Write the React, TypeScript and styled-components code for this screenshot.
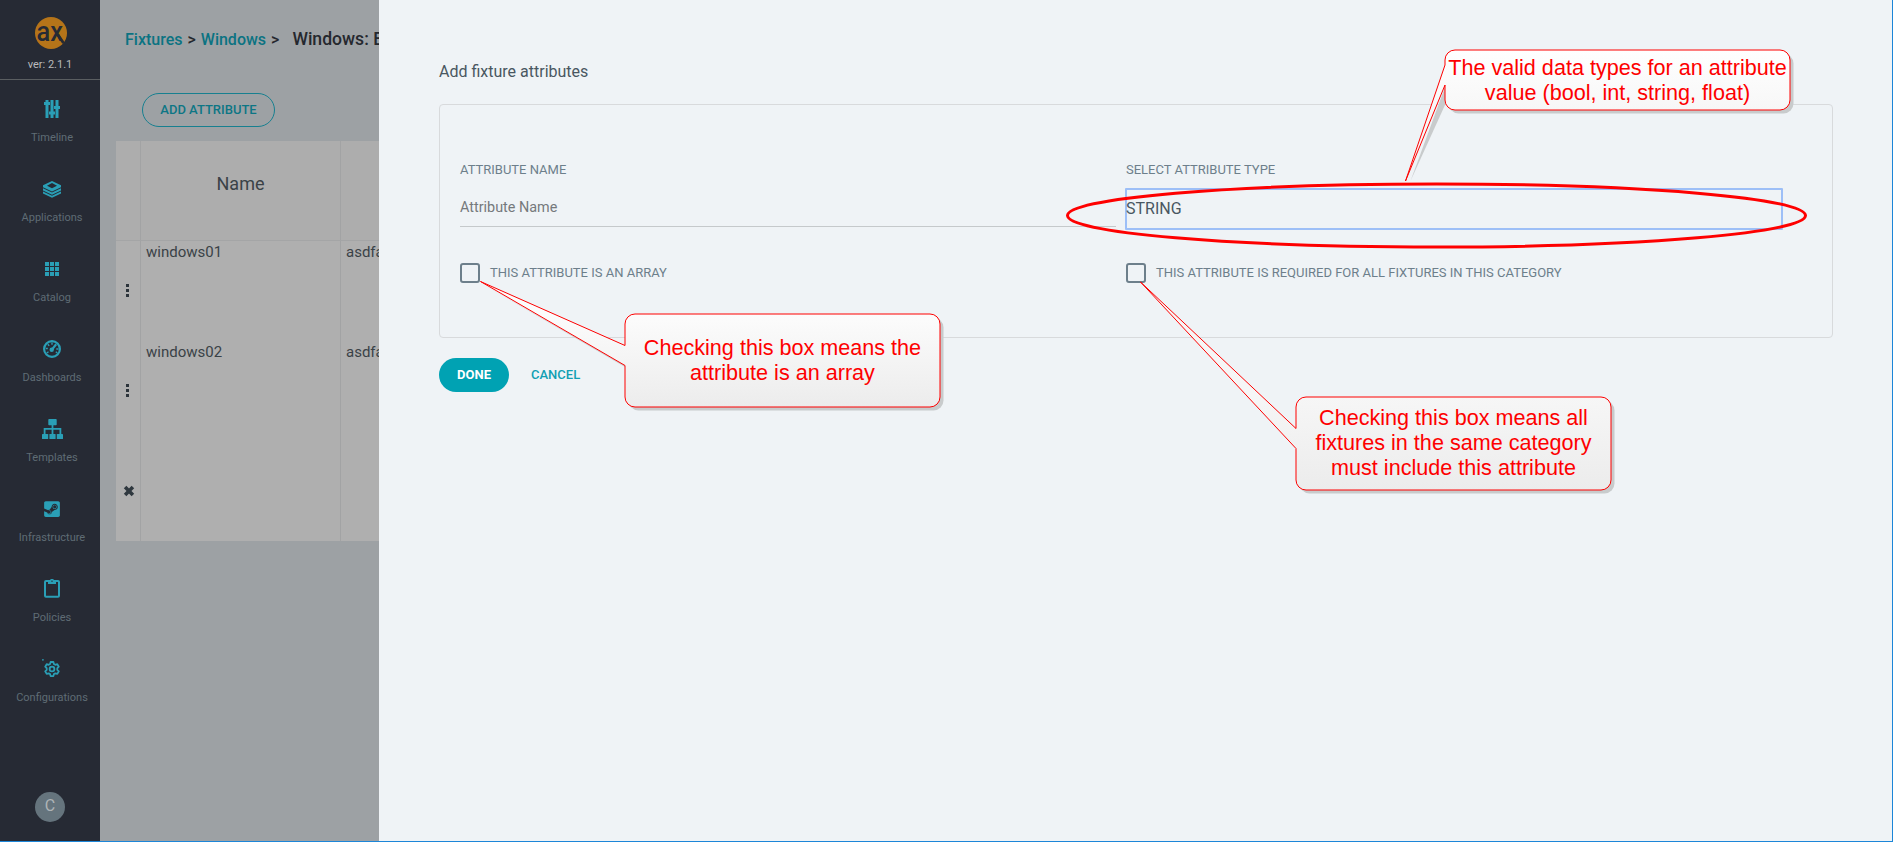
import React from "react";
import styled, { createGlobalStyle } from "styled-components";
import { FaSteamSquare } from "react-icons/fa";

const GlobalStyle = createGlobalStyle`
  *, *::before, *::after { box-sizing: border-box; }
  body {
    margin: 0;
    overflow: hidden;
    background: #eff3f6;
    font-family: Roboto, "Liberation Sans", sans-serif;
  }
  button { font-family: inherit; cursor: pointer; }
`;

const Shell = styled.div`
  position: relative;
  display: grid;
  grid-template-columns: 100px 279px 1fr;
  height: 842px;
  width: 1893px;
  border-bottom: 1px solid #1c86d8;
  overflow: hidden;
`;

/* ---------- side navigation ---------- */

const Sidebar = styled.nav`
  display: flex;
  flex-direction: column;
  background: #262a34;
`;

const Brand = styled.div`
  display: flex;
  flex-direction: column;
  align-items: center;
  height: 80px;
  padding-top: 17px;
  border-bottom: 1px solid #5a5e61;
`;

const Version = styled.span`
  margin-top: 8px;
  font-size: 11px;
  line-height: 14px;
  color: #b9babc;
`;

const NavList = styled.div`
  display: flex;
  flex-direction: column;
  padding: 15px 0 0 4px;
`;

const NavItem = styled.a`
  display: flex;
  flex-direction: column;
  align-items: center;
  height: 80px;
  color: #2a9fb6;
`;

const NavIcon = styled.span`
  display: flex;
  align-items: center;
  justify-content: center;
  height: 28px;
  width: 28px;
`;

const NavLabel = styled.span`
  margin-top: 8px;
  font-size: 11px;
  line-height: 14px;
  color: #5f6c74;
`;

const Avatar = styled.div`
  width: 30px;
  height: 30px;
  margin: auto auto 19px;
  border-radius: 50%;
  background: #65747d;
  color: #aeb3b6;
  font-size: 16px;
  line-height: 27px;
  text-align: center;
`;

/* ---------- dimmed page ---------- */

const Page = styled.main`
  display: flex;
  flex-direction: column;
  overflow: hidden;
  background: #9da1a4;
`;

const Breadcrumbs = styled.div`
  display: flex;
  align-items: baseline;
  gap: 5px;
  height: 93px;
  padding: 28px 0 0 25px;
  font-size: 16px;
  font-weight: 500;
  line-height: 22px;
  white-space: nowrap;
  color: #25282e;
`;

const Crumb = styled.a`
  color: #0b7382;
`;

const PageName = styled.span`
  margin-left: 8px;
  font-size: 17.6px;
`;

const OutlineButton = styled.button`
  align-self: flex-start;
  width: 133px;
  height: 34px;
  margin: 0 0 14px 42px;
  padding: 0 0 1px;
  border: 1px solid #178090;
  border-radius: 17px;
  background: none;
  color: #0d7685;
  font-size: 13px;
  font-weight: 500;
`;

const Table = styled.div`
  display: grid;
  grid-template-columns: 25px 200px 200px;
  grid-template-rows: 100px 100px 100px 100px;
  width: 425px;
  margin-left: 16px;
  background: #afafaf;
`;

const HeadCell = styled.div`
  display: flex;
  justify-content: center;
  padding-top: 32px;
  border-right: 1px solid #a2a3a4;
  border-bottom: 1px solid #a4a5a6;
  background: #adadad;
  color: #3a4247;
  font-size: 18px;
  line-height: 22px;
`;

const Cell = styled.div`
  padding-left: 5px;
  border-right: 1px solid #a2a3a4;
  color: #3a4247;
  font-size: 15px;
  line-height: 22px;
`;

const ActionCell = styled.div`
  display: flex;
  justify-content: center;
  align-items: center;
  border-right: 1px solid #a2a3a4;
`;

const Kebab = styled.span`
  display: flex;
  flex-direction: column;
  gap: 2px;
  margin: 0 1px 2px 0;
  i {
    width: 3px;
    height: 3px;
    background: #2c343b;
  }
`;

/* ---------- sliding panel ---------- */

const Panel = styled.section`
  display: flex;
  flex-direction: column;
  padding: 60px 59px 0 60px;
  border-right: 1px solid #1c86d8;
  background: #eff3f6;
`;

const PanelTitle = styled.h1`
  margin: 0 0 21px;
  font-size: 16px;
  font-weight: 400;
  line-height: 23px;
  color: #495761;
`;

const Card = styled.div`
  display: grid;
  grid-template-columns: 656px 658px;
  column-gap: 9px;
  align-content: start;
  height: 234px;
  padding: 57px 20px 0;
  border: 1px solid #d8dadc;
  border-radius: 4px;
`;

const Field = styled.div`
  display: flex;
  flex-direction: column;
`;

const Label = styled.label<{ $indent?: number }>`
  padding-left: ${(p) => p.$indent ?? 0}px;
  font-size: 13px;
  line-height: 16px;
  color: #6d7f8b;
`;

const TextInput = styled.div`
  height: 39px;
  margin: 10px 0 3px;
  border-bottom: 1px solid #c5c9cb;
  font-size: 14.4px;
  line-height: 39px;
  color: #75797c;
`;

const SelectBox = styled.div`
  height: 42px;
  margin-top: 10px;
  border: 2px solid #9dbff7;
  border-radius: 1px;
  font-size: 16px;
  line-height: 37px;
  text-indent: -1px;
  color: #495761;
`;

const CheckRow = styled.div<{ $indent?: number }>`
  display: flex;
  align-items: center;
  gap: 10px;
  height: 20px;
  margin: 33px 0 0 ${(p) => p.$indent ?? 0}px;
`;

const CheckBox = styled.span`
  width: 20px;
  height: 20px;
  border: 2px solid #6d7f8b;
  border-radius: 3px;
`;

const Actions = styled.div`
  display: flex;
  align-items: center;
  gap: 22px;
  margin-top: 20px;
`;

const PrimaryButton = styled.button`
  width: 70px;
  height: 34px;
  padding: 0 0 1px;
  border: 0;
  border-radius: 17px;
  background: #00a2b3;
  color: #fff;
  font-size: 13px;
  font-weight: 700;
`;

const LinkButton = styled.button`
  padding: 0 0 1px;
  border: 0;
  background: none;
  color: #119fb3;
  font-size: 13px;
  font-weight: 500;
`;

/* ---------- annotations ---------- */

const Annotations = styled.svg`
  position: absolute;
  inset: 0;
  pointer-events: none;
`;

const CalloutText = styled.div<{ $x: number; $y: number; $w: number; $h: number }>`
  position: absolute;
  left: ${(p) => p.$x}px;
  top: ${(p) => p.$y}px;
  width: ${(p) => p.$w}px;
  height: ${(p) => p.$h}px;
  display: flex;
  flex-direction: column;
  align-items: center;
  justify-content: center;
  font-family: "Liberation Sans", Arial, sans-serif;
  font-size: 21.6px;
  line-height: 25px;
  white-space: nowrap;
  color: #fe0000;
`;

interface CalloutSpec {
  id: string;
  x: number;
  y: number;
  w: number;
  h: number;
  tip: [number, number];
  base: [number, number];
  lift: number;
  shadow: string;
  from: string;
  to: string;
  lines: string[];
}

const callouts: CalloutSpec[] = [
  {
    id: "types", x: 1445, y: 50, w: 345, h: 60, tip: [1405.5, 181], base: [65, 85], lift: 0,
    shadow: "M1410.5 181L1445 87V105z", from: "#ffffff", to: "#f7f7f7",
    lines: ["The valid data types for an attribute", "value (bool, int, string, float)"],
  },
  {
    id: "array", x: 625, y: 314, w: 315, h: 93, tip: [480.5, 281.5], base: [345.5, 365.5], lift: 1,
    shadow: "M482 283.5L625 365.5V367z", from: "#fcfcfc", to: "#ececec",
    lines: ["Checking this box means the", "attribute is an array"],
  },
  {
    id: "required", x: 1296, y: 397, w: 315, h: 93, tip: [1140.5, 282], base: [428.5, 448.5], lift: 1,
    shadow: "", from: "#f6f6f6", to: "#ececec",
    lines: ["Checking this box means all", "fixtures in the same category", "must include this attribute"],
  },
];

function bubblePath({ x, y, w, h, tip, base }: CalloutSpec) {
  const r = 10;
  return `M${x + r} ${y}H${x + w - r}a${r} ${r} 0 0 1 ${r} ${r}V${y + h - r}a${r} ${r} 0 0 1 ${-r} ${r}H${x + r}a${r} ${r} 0 0 1 ${-r} ${-r}V${base[1]}L${tip[0]} ${tip[1]}L${x} ${base[0]}V${y + r}a${r} ${r} 0 0 1 ${r} ${-r}z`;
}

/* ---------- icons ---------- */

const Logo = () => (
  <svg width="33" height="33" viewBox="0 0 33 33">
    <circle cx="17" cy="16" r="16" fill="#b57419" />
    <text x="2.5" y="23.500" fontFamily="Roboto" fontWeight="500" fontSize="27" fill="#262a34" textLength="26.500" lengthAdjust="spacingAndGlyphs">ax</text>
    <path d="M24 18l5.500 8" stroke="#262a34" strokeWidth="2.800" />
  </svg>
);

const TimelineIcon = () => (
  <svg width="16" height="18" viewBox="0 0 16 18" fill="currentColor">
    <path d="M1.500 0h3v2H6v3H4.500v13h-3V5H0V2h1.500zM6.500 0h3v11.500H11v3H9.500V18h-3v-3.500H5v-3h1.500zM11.500 0h3v6H16v3h-1.500v9h-3V9H10V6h1.500z" />
  </svg>
);

const LayersIcon = () => (
  <svg width="18" height="17" viewBox="0 0 18 17" fill="currentColor">
    <path fillRule="evenodd" d="M9 0l9 4.200v2L9 10.500 0 6.200v-2zM9 2L4 4.700l5 2.600 5-2.600z" />
    <path d="M0 7.300l9 4.300 9-4.300v2.300L9 13.800 0 9.600zM0 10.600l9 4.200 9-4.200v1.900L9 16.800 0 12.500z" />
  </svg>
);

const GridIcon = () => (
  <svg width="14" height="14" viewBox="0 0 14 14" fill="currentColor">
    {[0, 5, 10].map((y) => [0, 5, 10].map((x) => <rect key={`${x}-${y}`} x={x} y={y} width="4" height="4" />))}
  </svg>
);

const GaugeIcon = () => (
  <svg width="18" height="18" viewBox="0 0 18 18" fill="none" stroke="currentColor">
    <circle cx="9" cy="9" r="7.900" strokeWidth="2.200" />
    <circle cx="8.700" cy="9.700" r="2.200" fill="currentColor" stroke="none" />
    <path d="M8.800 9.700L13.200 4.300" strokeWidth="2.200" />
    <path d="M9 2.500v2.300M4.800 4.300l1.400 1.600M2.800 8.500h2M13.300 9H15.500M3.800 13l1.700-1.200M12.800 11.800l1.500 1.200" strokeWidth="1.400" />
  </svg>
);

const SitemapIcon = () => (
  <svg width="21" height="20" viewBox="0 0 21 20" fill="currentColor">
    <rect x="6.300" width="8.400" height="6.300" rx=".8" />
    <path d="M9.600 6h1.800v3H19.300v6h-1.800v-4.200h-6.100V15H9.600v-4.200H3.500V15H1.700V9h7.900z" />
    <rect x="0" y="15" width="6.200" height="5" rx=".6" />
    <rect x="7.400" y="15" width="6.200" height="5" rx=".6" />
    <rect x="14.800" y="15" width="6.200" height="5" rx=".6" />
  </svg>
);

const ClipboardIcon = () => (
  <svg width="16" height="20" viewBox="0 0 16 20">
    <rect x="1" y="2" width="14" height="15.800" rx="1" fill="none" stroke="currentColor" strokeWidth="2" />
    <path d="M4 5V1.500h2.200a1.800 1.800 0 0 1 3.600 0H12V5z" fill="currentColor" />
    <circle cx="8" cy="2.300" r=".7" fill="#262a34" />
  </svg>
);

const GearIcon = () => (
  <svg width="20" height="20" viewBox="0 0 20 20" fill="none" stroke="currentColor">
    <path d="M0 .8h1.800" strokeWidth="1.200" />
    <path
      transform="translate(0 1)"
      strokeWidth="1.800"
      strokeLinejoin="round"
      d="M8.600 2h2.800l.5 2 1.400.8 2-.6 1.500 2.500-1.500 1.500v1.700l1.500 1.500-1.500 2.500-2-.6-1.400.8-.5 2H8.600l-.5-2-1.400-.8-2 .6-1.500-2.500 1.500-1.500V8.200L3.200 6.700l1.500-2.500 2 .6L8.100 4z"
    />
    <circle cx="10" cy="10" r="2.400" strokeWidth="1.800" />
  </svg>
);

const CloseMark = styled.svg`
  margin-left: 2px;
`;

const CloseIcon = () => (
  <CloseMark width="12" height="12" viewBox="0 0 12 12">
    <path d="M2.100 2.100l7.800 7.800M9.900 2.100l-7.800 7.800" stroke="#2f383f" strokeWidth="3.600" />
  </CloseMark>
);

const navItems = [
  { label: "Timeline", icon: <TimelineIcon /> },
  { label: "Applications", icon: <LayersIcon /> },
  { label: "Catalog", icon: <GridIcon /> },
  { label: "Dashboards", icon: <GaugeIcon /> },
  { label: "Templates", icon: <SitemapIcon /> },
  { label: "Infrastructure", icon: <FaSteamSquare size={18} /> },
  { label: "Policies", icon: <ClipboardIcon /> },
  { label: "Configurations", icon: <GearIcon /> },
];

const fixtures = [
  { name: "windows01", value: "asdfa" },
  { name: "windows02", value: "asdfa" },
];

export default function App() {
  return (
    <>
      <GlobalStyle />
      <Shell>
        <Sidebar>
          <Brand>
            <Logo />
            <Version>ver: 2.1.1</Version>
          </Brand>
          <NavList>
            {navItems.map((item) => (
              <NavItem key={item.label}>
                <NavIcon>{item.icon}</NavIcon>
                <NavLabel>{item.label}</NavLabel>
              </NavItem>
            ))}
          </NavList>
          <Avatar>C</Avatar>
        </Sidebar>

        <Page>
          <Breadcrumbs>
            <Crumb>Fixtures</Crumb>
            <span>&gt;</span>
            <Crumb>Windows</Crumb>
            <span>&gt;</span>
            <PageName>Windows: E</PageName>
          </Breadcrumbs>
          <OutlineButton>ADD ATTRIBUTE</OutlineButton>
          <Table>
            <HeadCell />
            <HeadCell>Name</HeadCell>
            <HeadCell />
            {fixtures.map((f) => (
              <React.Fragment key={f.name}>
                <ActionCell>
                  <Kebab><i /><i /><i /></Kebab>
                </ActionCell>
                <Cell>{f.name}</Cell>
                <Cell>{f.value}</Cell>
              </React.Fragment>
            ))}
            <ActionCell><CloseIcon /></ActionCell>
            <Cell />
            <Cell />
          </Table>
        </Page>

        <Panel>
          <PanelTitle>Add fixture attributes</PanelTitle>
          <Card>
            <Field>
              <Label>ATTRIBUTE NAME</Label>
              <TextInput>Attribute Name</TextInput>
              <CheckRow>
                <CheckBox />
                <Label>THIS ATTRIBUTE IS AN ARRAY</Label>
              </CheckRow>
            </Field>
            <Field>
              <Label $indent={1}>SELECT ATTRIBUTE TYPE</Label>
              <SelectBox>STRING</SelectBox>
              <CheckRow $indent={1}>
                <CheckBox />
                <Label>THIS ATTRIBUTE IS REQUIRED FOR ALL FIXTURES IN THIS CATEGORY</Label>
              </CheckRow>
            </Field>
          </Card>
          <Actions>
            <PrimaryButton>DONE</PrimaryButton>
            <LinkButton>CANCEL</LinkButton>
          </Actions>
        </Panel>

        <Annotations width="1893" height="842" viewBox="0 0 1893 842" fill="none">
          <defs>
            {callouts.map((c) => (
              <linearGradient key={c.id} id={c.id} gradientUnits="userSpaceOnUse" x1="0" y1={c.y} x2="0" y2={c.y + c.h}>
                <stop offset="0" stopColor={c.from} />
                <stop offset="1" stopColor={c.to} />
              </linearGradient>
            ))}
          </defs>
          <ellipse cx="1436.500" cy="215.500" rx="369" ry="31.500" stroke="#fe0000" strokeWidth="3" />
          {callouts.map((c) => (
            <g key={c.id}>
              <path d={c.shadow} fill="#c8cbcc" />
              <rect x={c.x + 3.5} y={c.y + 3.5} width={c.w} height={c.h} rx="10" fill="#c8cbcc" />
              <path d={bubblePath(c)} fill={`url(#${c.id})`} stroke="#fe0000" strokeWidth="1" strokeLinejoin="round" />
            </g>
          ))}
        </Annotations>
        {callouts.map((c) => (
          <CalloutText key={c.id} $x={c.x} $y={c.y - c.lift} $w={c.w} $h={c.h}>
            {c.lines.map((line) => (
              <span key={line}>{line}</span>
            ))}
          </CalloutText>
        ))}
      </Shell>
    </>
  );
}
